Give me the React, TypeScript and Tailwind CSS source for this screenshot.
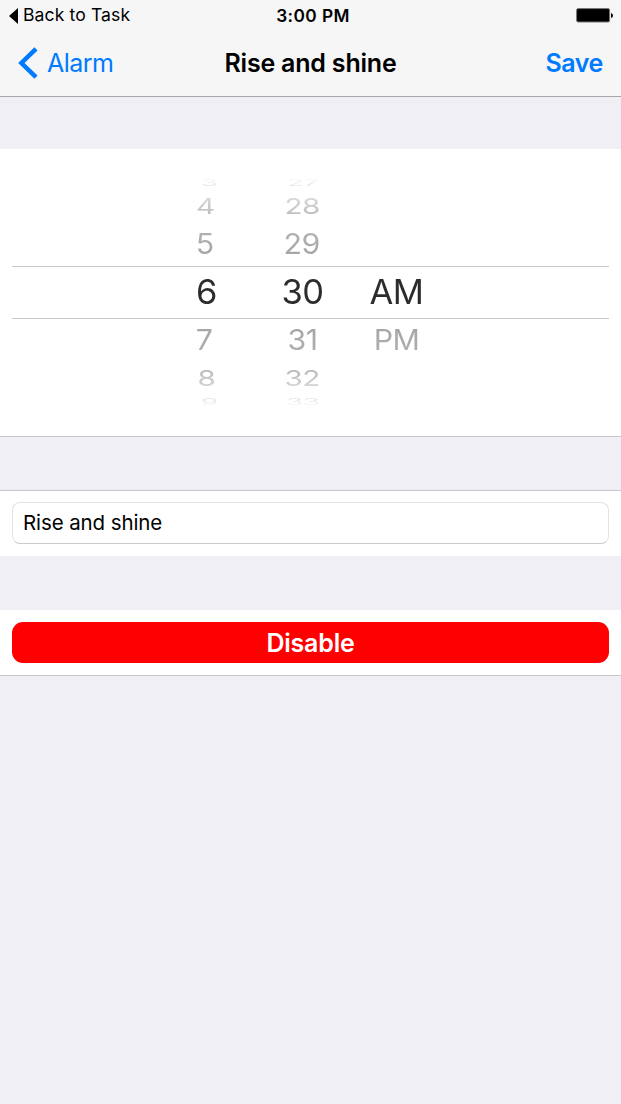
type WheelRow = {
  hour: string;
  minute: string;
  period: string;
  row: string;
  glyph: string;
  hourShift: string;
  minuteShift: string;
};

const wheel: WheelRow[] = [
  { hour: "3", minute: "27", period: "", row: "h-[14px]", glyph: "scale-x-[0.8] scale-y-[0.27] from-[#fafafa] to-[#e0e0e0]", hourShift: "translate-x-[3px]", minuteShift: "translate-x-[0px]" },
  { hour: "4", minute: "28", period: "", row: "h-[32px] pt-px", glyph: "scale-x-[0.86] scale-y-[0.61] from-[#dcdcdc] to-[#b8b8b8]", hourShift: "translate-x-[-0.5px]", minuteShift: "translate-x-[-0.5px]" },
  { hour: "5", minute: "29", period: "", row: "h-[44px]", glyph: "scale-x-[0.88] scale-y-[0.83] from-[#b3b3b3] to-[#a3a3a3]", hourShift: "translate-x-[-1.5px]", minuteShift: "translate-x-[-1px]" },
  { hour: "6", minute: "30", period: "AM", row: "h-[53px] pb-[2px] border-y border-[#cbcbcb]", glyph: "from-[#2c2c2e] to-[#2c2c2e]", hourShift: "translate-x-[0.5px]", minuteShift: "translate-x-[-0.5px]" },
  { hour: "7", minute: "31", period: "PM", row: "h-[44px] pb-[2px]", glyph: "scale-x-[0.88] scale-y-[0.83] from-[#a5a5a5] to-[#b0b0b0]", hourShift: "translate-x-[-1.5px]", minuteShift: "translate-x-[-0.5px]" },
  { hour: "8", minute: "32", period: "", row: "h-[30px] pt-[2px]", glyph: "scale-x-[0.86] scale-y-[0.61] from-[#b6b6b6] to-[#dadada]", hourShift: "translate-x-[0px]", minuteShift: "translate-x-[-0.5px]" },
  { hour: "9", minute: "33", period: "", row: "h-[17px]", glyph: "scale-x-[0.8] scale-y-[0.27] from-[#e0e0e0] to-[#fafafa]", hourShift: "translate-x-[3px]", minuteShift: "translate-x-[0px]" },
];

function Glyph({ text, tone, shift }: { text: string; tone: string; shift: string }) {
  return (
    <div className={`flex items-center justify-center ${shift}`}>
      <span className={`block bg-gradient-to-b bg-clip-text text-[34.5px] leading-[36px] tracking-[-0.5px] whitespace-nowrap text-transparent ${tone}`}>
        {text}
      </span>
    </div>
  );
}

function TimeWheel() {
  return (
    <section className="h-[288px] border-b border-[#c8c7cc] bg-white px-3 pt-[27px]">
      {wheel.map((r) => (
        <div key={r.hour} className={`grid grid-cols-[100px_94px_94px] content-center pl-[144px] ${r.row}`}>
          <Glyph text={r.hour} tone={r.glyph} shift={r.hourShift} />
          <Glyph text={r.minute} tone={r.glyph} shift={r.minuteShift} />
          <Glyph text={r.period} tone={r.glyph} shift="tracking-[-1px] translate-x-[-0.5px]" />
        </div>
      ))}
    </section>
  );
}

export default function App() {
  return (
    <div className="min-h-[1104px] w-[621px] overflow-hidden bg-[#efeff4] font-[Inter,sans-serif] text-black">
      <header className="h-[97px] border-b border-[#a7a7aa] bg-[#f6f6f7]">
        <div className="grid h-[30px] grid-cols-3 items-center">
          <div className="flex items-center pl-[9px]">
            <svg width="10" height="16" viewBox="0 0 10 16" aria-hidden="true">
              <path d="M9 0v16L0 8z" />
            </svg>
            <span className="pb-[2px] pl-[4px] text-[17.6px] leading-[28px] tracking-[0.1px] whitespace-nowrap">Back to Task</span>
          </div>
          <div className="pt-px pl-[5px] text-center text-[17.3px] leading-[30px] font-semibold tracking-[0.4px] whitespace-nowrap">3:00 PM</div>
          <div className="flex justify-end pr-[8px]">
            <svg width="37" height="15" viewBox="0 0 37 15" aria-hidden="true">
              <rect x=".6" y=".6" width="33" height="13.4" rx="1.5" stroke="#777" />
              <path d="M35 5q2 .5 2 2.5T35 10z" />
            </svg>
          </div>
        </div>
        <div className="grid h-[66px] grid-cols-[1fr_auto_1fr] items-center">
          <button className="flex items-center pl-[18px] text-[#007aff]">
            <svg width="20" height="32" viewBox="0 0 20 32" fill="none" stroke="currentColor" strokeWidth="4.5" aria-hidden="true">
              <path d="M18 1.8 3.4 16 18 30.2" />
            </svg>
            <span className="pl-[9px] text-[25px] leading-[32px] tracking-[-0.55px]">Alarm</span>
          </button>
          <h1 className="text-[25px] leading-[32px] font-semibold tracking-[-0.2px]">Rise and shine</h1>
          <button className="pr-[18px] text-right text-[25px] leading-[32px] font-semibold tracking-[-0.4px] text-[#007aff]">Save</button>
        </div>
      </header>
      <main className="pt-[52px]">
        <TimeWheel />
        <section className="mt-[53px] h-[66px] border-t border-[#c8c7cc] bg-white px-3 pt-[11px]">
          <input
            aria-label="Alarm name"
            defaultValue="Rise and shine"
            className="block h-[42px] w-full rounded-[8px] border border-[#e3e3e5] border-b-[#cbcbcd] px-[10px] pb-[2px] text-[20.5px] tracking-[-0.1px] outline-none"
          />
        </section>
        <section className="mt-[54px] h-[66px] border-b border-[#c8c7cc] bg-white px-3 pt-[12px]">
          <button className="block h-[41px] w-full rounded-[11px] bg-[#ff0000] pt-px text-[25px] leading-[40px] font-semibold tracking-[-0.2px] text-white">
            Disable
          </button>
        </section>
      </main>
    </div>
  );
}
